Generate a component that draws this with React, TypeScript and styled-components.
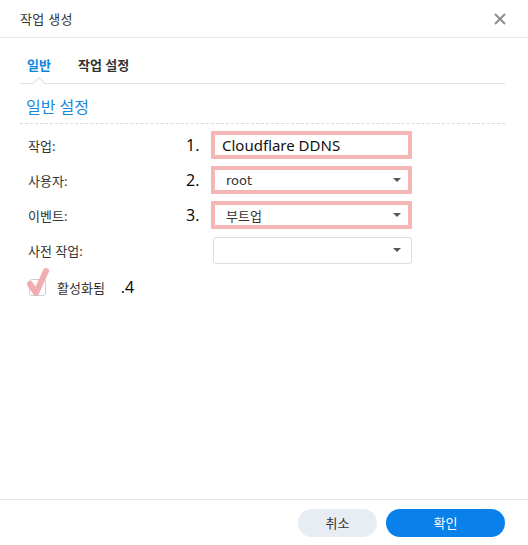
import React from "react";
import styled, { createGlobalStyle } from "styled-components";

const Global = createGlobalStyle`
  html, body {
    margin: 0;
    padding: 0;
    background: #fff;
  }
  body {
    font-family: "Noto Sans", "Noto Sans CJK KR", sans-serif;
    color: #333;
  }
`;

const Dialog = styled.div`
  width: 528px;
  height: 545px;
  display: flex;
  flex-direction: column;
  background: #fff;
`;

const Header = styled.div`
  height: 38px;
  display: flex;
  align-items: center;
  justify-content: space-between;
  padding: 0 22px 0 20px;
  border-bottom: 1px solid #e6e8eb;
  box-sizing: border-box;
`;

const Title = styled.span`
  font-size: 13px;
  color: #333;
  letter-spacing: 0.3px;
`;

const Close = styled.span`
  width: 12px;
  height: 12px;
  display: flex;
`;

const Body = styled.div`
  flex: 1;
  padding: 0 23px 0 20px;
`;

const TabBar = styled.div`
  height: 46px;
  display: flex;
  align-items: flex-end;
  gap: 27px;
  padding-left: 7px;
  border-bottom: 1px solid #dfe3e8;
  box-sizing: border-box;
`;

const Tab = styled.div<{ $active?: boolean }>`
  position: relative;
  font-size: 13px;
  font-weight: 600;
  color: ${(p) => (p.$active ? "#0a86e0" : "#333")};
  padding-bottom: 9px;
  &::after {
    content: "";
    display: ${(p) => (p.$active ? "block" : "none")};
    position: absolute;
    left: 50%;
    bottom: -1px;
    width: 9px;
    height: 9px;
    background: #fff;
    border-left: 1px solid #dfe3e8;
    border-top: 1px solid #dfe3e8;
    transform: translate(-50%, 5px) rotate(45deg);
  }
`;

const Section = styled.div`
  height: 40px;
  display: flex;
  align-items: flex-end;
  padding: 0 0 5px 6px;
  font-size: 16px;
  color: #1a88dc;
  border-bottom: 1px dashed #d6dbe1;
  box-sizing: border-box;
`;

const Form = styled.div`
  display: grid;
  grid-template-columns: 158px 25px 201px;
  grid-auto-rows: 28px;
  row-gap: 7px;
  align-items: center;
  padding: 7px 0 0 8px;
`;

const Label = styled.span`
  font-size: 13px;
  color: #333;
`;

const Mark = styled.span`
  font-size: 16px;
  color: #000;
  font-family: "Open Sans", sans-serif;
`;

const Field = styled.div<{ $marked?: boolean }>`
  height: ${(p) => (p.$marked ? "28px" : "27px")};
  box-sizing: border-box;
  display: flex;
  align-items: center;
  justify-content: space-between;
  background: #fff;
  border: ${(p) => (p.$marked ? "4px solid #f5b6b6" : "1px solid #dadde1")};
  border-radius: ${(p) => (p.$marked ? "1px" : "3px")};
  margin-left: ${(p) => (p.$marked ? "0" : "2px")};
  padding: 0 ${(p) => (p.$marked ? "7px" : "10px")} 0 ${(p) => (p.$marked ? "7px" : "10px")};
`;

const InputText = styled.span`
  font-size: 15px;
  color: #111;
  font-family: "Noto Sans", sans-serif;
`;

const SelectText = styled.span`
  font-size: 13px;
  color: #333;
  padding-left: 4px;
  font-family: "DejaVu Sans", "Noto Sans CJK KR", sans-serif;
`;

const Caret = styled.span`
  width: 0;
  height: 0;
  border-left: 4px solid transparent;
  border-right: 4px solid transparent;
  border-top: 4px solid #555;
  margin-left: auto;
`;

const CheckRow = styled.div`
  display: flex;
  align-items: center;
  padding: 12px 0 0 9px;
`;

const BoxWrap = styled.div`
  position: relative;
  width: 17px;
  height: 17px;
  margin-right: 11px;
`;

const CheckBox = styled.div`
  width: 17px;
  height: 17px;
  box-sizing: border-box;
  border: 1px solid #c9d1db;
  border-radius: 3px;
  background: #fff;
`;

const Overlay = styled.svg`
  position: absolute;
  left: -3px;
  top: -12px;
`;

const CheckLabel = styled.span`
  font-size: 13px;
  color: #333;
  margin-right: 16px;
`;

const Footer = styled.div`
  height: 46px;
  border-top: 1px solid #e4e8ee;
  box-sizing: border-box;
  display: flex;
  align-items: center;
  justify-content: flex-end;
  gap: 9px;
  padding: 0 23px 0 0;
`;

const Button = styled.button<{ $primary?: boolean }>`
  height: 28px;
  width: ${(p) => (p.$primary ? "119px" : "79px")};
  border: none;
  border-radius: 14px;
  font-family: "Noto Sans CJK KR", sans-serif;
  font-size: 13px;
  background: ${(p) => (p.$primary ? "#0a80ea" : "#e8edf3")};
  color: ${(p) => (p.$primary ? "#fff" : "#333")};
  cursor: pointer;
`;

const rows = [
  { label: "작업:", mark: "1.", text: "Cloudflare DDNS", select: false, marked: true },
  { label: "사용자:", mark: "2.", text: "root", select: true, marked: true },
  { label: "이벤트:", mark: "3.", text: "부트업", select: true, marked: true },
  { label: "사전 작업:", mark: "", text: "", select: true, marked: false },
];

export default function App() {
  return (
    <>
      <Global />
      <Dialog>
        <Header>
          <Title>작업 생성</Title>
          <Close>
            <svg width="12" height="12" viewBox="0 0 12 12">
              <path d="M1 1 L11 11 M11 1 L1 11" stroke="#8a8d91" strokeWidth="2" />
            </svg>
          </Close>
        </Header>
        <Body>
          <TabBar>
            <Tab $active>일반</Tab>
            <Tab>작업 설정</Tab>
          </TabBar>
          <Section>일반 설정</Section>
          <Form>
            {rows.map((r) => (
              <React.Fragment key={r.label}>
                <Label>{r.label}</Label>
                <Mark>{r.mark}</Mark>
                <Field $marked={r.marked}>
                  {r.select ? <SelectText>{r.text}</SelectText> : <InputText>{r.text}</InputText>}
                  {r.select && <Caret />}
                </Field>
              </React.Fragment>
            ))}
          </Form>
          <CheckRow>
            <BoxWrap>
              <CheckBox />
              <Overlay width="24" height="30" viewBox="0 0 24 30">
                <path d="M4 17 L10 26 L20 4" fill="none" stroke="#f0a4a8" strokeWidth="6" strokeLinecap="round" strokeLinejoin="round" opacity="0.9" />
              </Overlay>
            </BoxWrap>
            <CheckLabel>활성화됨</CheckLabel>
            <Mark>.4</Mark>
          </CheckRow>
        </Body>
        <Footer>
          <Button>취소</Button>
          <Button $primary>확인</Button>
        </Footer>
      </Dialog>
    </>
  );
}
